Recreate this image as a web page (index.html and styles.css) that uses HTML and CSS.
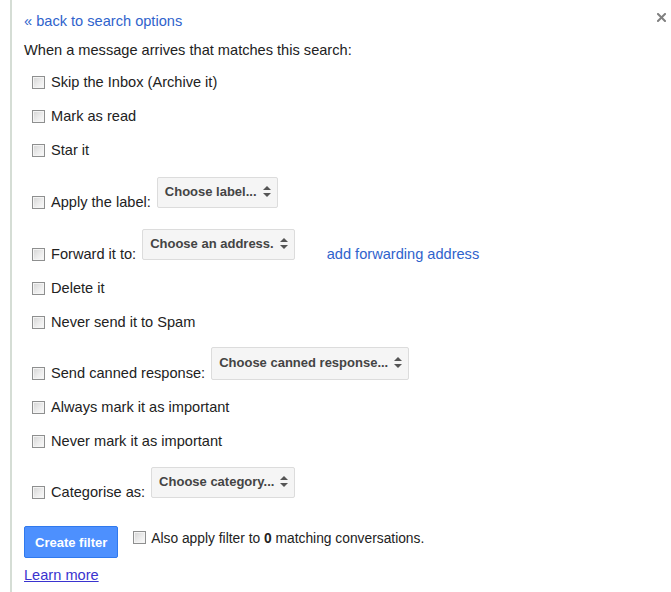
FILE: index.html
```html
<!DOCTYPE html>
<html lang="en">
<head>
<meta charset="utf-8">
<title>Create filter</title>
<link rel="stylesheet" href="styles.css">
</head>
<body>
<div class="panel">
  <div class="head">
    <a class="back" href="#">« back to search options</a>
    <button class="close" type="button" aria-label="Close">
      <svg width="9" height="9" viewBox="0 0 9 9"><path d="M1 1L8 8M8 1L1 8" stroke="#808080" stroke-width="2" stroke-linecap="square"/></svg>
    </button>
  </div>
  <p class="intro">When a message arrives that matches this search:</p>

  <ul class="actions">
    <li class="row"><label class="opt"><input type="checkbox"><span>Skip the Inbox (Archive it)</span></label></li>
    <li class="row"><label class="opt"><input type="checkbox"><span>Mark as read</span></label></li>
    <li class="row"><label class="opt"><input type="checkbox"><span>Star it</span></label></li>
    <li class="row row-select">
      <label class="opt"><input type="checkbox"><span>Apply the label:</span></label>
      <div class="select"><span>Choose label...</span><svg class="arrows" width="8" height="11" viewBox="0 0 8 11"><path d="M4 0L8 4H0Z M0 7H8L4 11Z" fill="#555"/></svg></div>
    </li>
    <li class="row row-select">
      <label class="opt"><input type="checkbox"><span>Forward it to:</span></label>
      <div class="select"><span>Choose an address.</span><svg class="arrows" width="8" height="11" viewBox="0 0 8 11"><path d="M4 0L8 4H0Z M0 7H8L4 11Z" fill="#555"/></svg></div>
      <a class="fwd" href="#">add forwarding address</a>
    </li>
    <li class="row"><label class="opt"><input type="checkbox"><span>Delete it</span></label></li>
    <li class="row"><label class="opt"><input type="checkbox"><span>Never send it to Spam</span></label></li>
    <li class="row row-select canned">
      <label class="opt"><input type="checkbox"><span>Send canned response:</span></label>
      <div class="select tall"><span>Choose canned response...</span><svg class="arrows" width="8" height="11" viewBox="0 0 8 11"><path d="M4 0L8 4H0Z M0 7H8L4 11Z" fill="#555"/></svg></div>
    </li>
    <li class="row"><label class="opt"><input type="checkbox"><span>Always mark it as important</span></label></li>
    <li class="row"><label class="opt"><input type="checkbox"><span>Never mark it as important</span></label></li>
    <li class="row row-select short">
      <label class="opt"><input type="checkbox"><span>Categorise as:</span></label>
      <div class="select"><span>Choose category...</span><svg class="arrows" width="8" height="11" viewBox="0 0 8 11"><path d="M4 0L8 4H0Z M0 7H8L4 11Z" fill="#555"/></svg></div>
    </li>
  </ul>

  <div class="submit">
    <button class="btn" type="button">Create filter</button>
    <label class="also"><input type="checkbox"><span>Also apply filter to <b>0</b> matching conversations.</span></label>
  </div>
  <a class="learn" href="#">Learn more</a>
</div>
</body>
</html>
```

FILE: styles.css
```css
html, body {
  margin: 0;
  background: #fff;
}

body {
  font-family: "Liberation Sans", Arial, sans-serif;
  font-size: 14.6px;
  color: #222;
}

.panel {
  margin-left: 10px;
  min-height: 592px;
  box-sizing: border-box;
  border-left: 2px solid #d5ddd5;
  padding: 12px 5px 0 12px;
}

/* header: back link + close cross */
.head {
  display: flex;
  justify-content: space-between;
  align-items: flex-start;
  height: 18px;
  line-height: 18px;
}

.back {
  color: #2f63cc;
  text-decoration: none;
}

.close {
  display: block;
  width: 9px;
  height: 9px;
  margin-top: 1px;
  padding: 0;
  border: 0;
  background: none;
  cursor: pointer;
}

.close svg {
  display: block;
}

.intro {
  margin: 11px 0 0;
  line-height: 18px;
}

/* action list */
.actions {
  list-style: none;
  margin: 6px 0 0;
  padding: 0 0 0 8px;
}

.row {
  display: flex;
  align-items: flex-end;
}

/* the dropdown sits higher than its label, so these rows need room above */
.row-select {
  padding-top: 10px;
}

.row-select.short {
  padding-top: 9px;
}

.row-select.canned {
  padding-top: 8px;
}

.opt {
  display: flex;
  align-items: center;
  gap: 6px;
  height: 34px;
}

input[type="checkbox"] {
  appearance: none;
  -webkit-appearance: none;
  box-sizing: border-box;
  width: 13px;
  height: 13px;
  margin: 0;
  flex: none;
  border: 1px solid #8e8f8f;
  background: linear-gradient(135deg, #d4d4d4 0%, #ececec 55%, #fafafa 100%);
  box-shadow: inset 0 0 0 1px #f4f4f4;
}

/* select-like dropdown */
.select {
  display: flex;
  align-items: center;
  gap: 6px;
  box-sizing: border-box;
  height: 31px;
  margin: 0 0 11px 6px;
  padding: 0 6px 2px 7px;
  border: 1px solid #dcdcdc;
  border-radius: 2px;
  background: #f5f5f5;
  color: #444;
  font-size: 13px;
  font-weight: bold;
  white-space: nowrap;
}

.select.tall {
  height: 33px;
  margin-bottom: 10px;
}

.arrows {
  display: block;
  flex: none;
}

.fwd {
  margin-left: 32px;
  line-height: 34px;
  color: #2f63cc;
  text-decoration: none;
}

/* submit area */
.submit {
  display: flex;
  align-items: flex-start;
  margin-top: 17px;
}

.btn {
  box-sizing: border-box;
  height: 32px;
  padding: 0 10px;
  border: 1px solid #3079ed;
  border-radius: 2px;
  background: #4d90fe;
  color: #fff;
  font-family: "Liberation Sans", Arial, sans-serif;
  font-size: 13px;
  font-weight: bold;
  cursor: pointer;
}

.also {
  display: flex;
  align-items: flex-start;
  gap: 5px;
  margin-left: 15px;
  padding-top: 4px;
  font-size: 13.8px;
  line-height: 17px;
}

.also input {
  margin-top: 1px;
}

.learn {
  display: inline-block;
  margin-top: 9px;
  line-height: 17px;
  color: #3a33cf;
  text-decoration: underline;
}
```
